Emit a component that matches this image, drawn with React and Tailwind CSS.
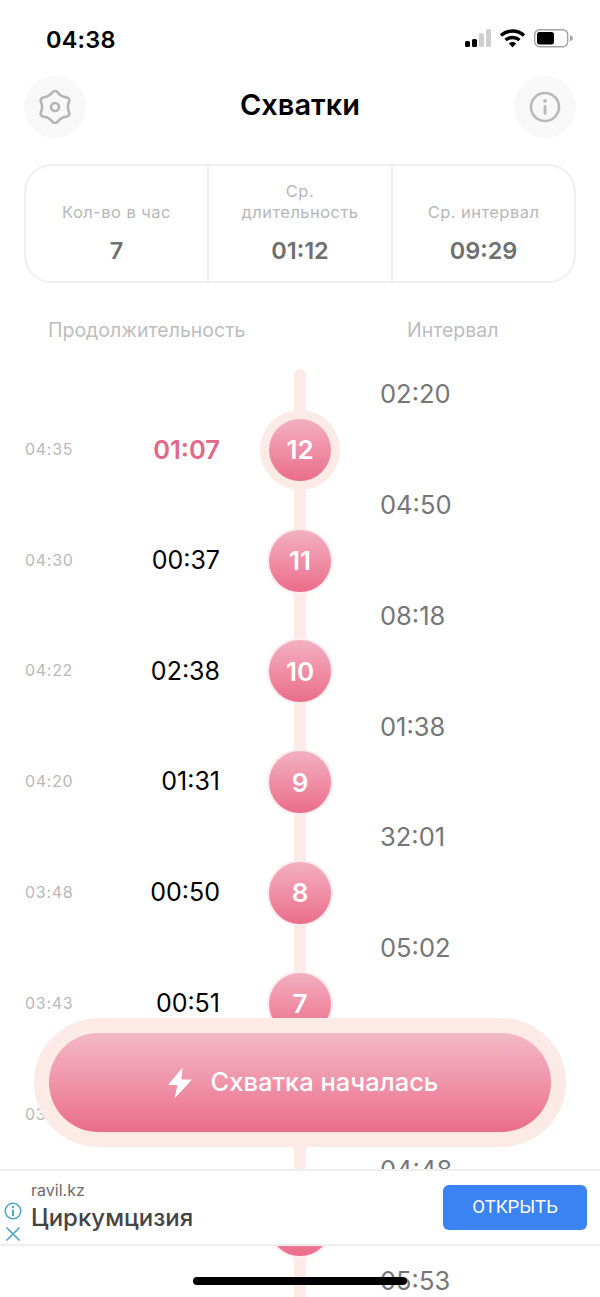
import React from 'react';

// the last rows sit under the button and the ad, only what shows is filled in
const rows = [
  { at: '04:35', len: '01:07', n: 12, active: true },
  { at: '04:30', len: '00:37', n: 11 },
  { at: '04:22', len: '02:38', n: 10 },
  { at: '04:20', len: '01:31', n: 9 },
  { at: '03:48', len: '00:50', n: 8 },
  { at: '03:43', len: '00:51', n: 7 },
  { at: '03:37', len: '', n: '' },
  { at: '', len: '', n: '' },
];

const intervals = ['02:20', '04:50', '08:18', '01:38', '32:01', '05:02', '', '04:48', '05:53'];

const stats = [
  { label: 'Кол-во в час', value: '7' },
  { label: 'Ср. длительность', value: '01:12', narrow: true },
  { label: 'Ср. интервал', value: '09:29' },
];

// six soft lobes, top lobe on the vertical axis
const gearPath = () => {
  const pts = [];
  for (let i = 0; i < 12; i++) {
    const a = (i * Math.PI) / 6 - Math.PI / 2;
    const r = i % 2 === 0 ? 18 : 12;
    pts.push([16 + r * Math.cos(a), 17 + r * Math.sin(a)]);
  }
  const mid = (p, q) => [(p[0] + q[0]) / 2, (p[1] + q[1]) / 2];
  const start = mid(pts[11], pts[0]);
  let d = `M${start[0].toFixed(2)} ${start[1].toFixed(2)}`;
  pts.forEach((p, i) => {
    const m = mid(p, pts[(i + 1) % 12]);
    d += ` Q${p[0].toFixed(2)} ${p[1].toFixed(2)} ${m[0].toFixed(2)} ${m[1].toFixed(2)}`;
  });
  return d + 'Z';
};

const StatusBar = () => (
  <div className="h-[76px] pt-[2px] flex items-center justify-between pl-[46px] pr-[27px]">
    <span className="pt-[1px] text-[23.5px] font-semibold text-black tracking-[0.2px]">04:38</span>
    <svg width="108" height="20" viewBox="0 0 108 20">
      <rect x="0" y="12" width="5" height="6" rx="1.5" fill="#000" />
      <rect x="7" y="10" width="5" height="8" rx="1.5" fill="#000" />
      <rect x="14" y="4" width="5" height="14" rx="1.5" fill="#cfcfcf" />
      <rect x="21" y="0" width="5" height="18" rx="1.5" fill="#cfcfcf" />
      <path d="M36 6.5 A17 17 0 0 1 59 6.5" fill="none" stroke="#000" strokeWidth="3.4" />
      <path d="M40.5 11 A11 11 0 0 1 54.5 11" fill="none" stroke="#000" strokeWidth="3.4" />
      <path d="M47.5 18.5 L43.8 14.5 A5.5 5.5 0 0 1 51.2 14.5 Z" fill="#000" />
      <rect x="69.7" y="0.7" width="33" height="17" rx="5" fill="none" stroke="#a3a3a3" strokeWidth="1.4" />
      <rect x="72" y="3" width="17" height="12.5" rx="2.5" fill="#000" />
      <path d="M105 6.5 a2.5 2.5 0 0 1 0 5.5 Z" fill="#a3a3a3" />
    </svg>
  </div>
);

const Header = () => (
  <div className="h-[61px] px-[24px] flex items-center justify-between">
    <div className="w-[62px] h-[62px] rounded-full bg-[#f8f8f8] flex items-center justify-center">
      <svg width="32" height="34" viewBox="0 0 32 34" fill="none" stroke="#b4b4b4" strokeWidth="2.6">
        <path d={gearPath()} strokeLinejoin="round" />
        <circle cx="16" cy="17" r="4" />
      </svg>
    </div>
    <h1 className="pb-[4px] text-[29px] font-semibold text-black">Схватки</h1>
    <div className="w-[62px] h-[62px] rounded-full bg-[#f8f8f8] flex items-center justify-center">
      <svg width="32" height="32" viewBox="0 0 32 32" fill="none">
        <circle cx="16" cy="16" r="14" stroke="#b9b9b9" strokeWidth="2.6" />
        <circle cx="16" cy="9.8" r="1.9" fill="#b9b9b9" />
        <rect x="14.6" y="14" width="2.8" height="10" rx="1.4" fill="#b9b9b9" />
      </svg>
    </div>
  </div>
);

const StatsCard = () => (
  <div className="mx-[24px] mt-[27px] h-[119px] rounded-[28px] border-2 border-[#efefef] grid grid-cols-[183px_184px_1fr] divide-x-2 divide-[#efefef]">
    {stats.map((s) => (
      <div key={s.value} className="flex flex-col items-center justify-end pb-[15px]">
        <div className={`text-[16.5px] leading-[21px] text-[#b7b7b7] text-center tracking-[0.45px] ${s.narrow ? 'w-[130px]' : ''}`}>
          {s.label}
        </div>
        <div className="mt-[13px] text-[23.5px] leading-[30px] font-semibold text-[#6f6f6f]">{s.value}</div>
      </div>
    ))}
  </div>
);

const Node = ({ n, active }) => (
  <div className={`rounded-full flex items-center justify-center shrink-0 ${active ? 'w-[80px] h-[80px] bg-[#fbeae6]' : 'w-[66px] h-[66px] bg-[#fdeaea]'}`}>
    <div className="w-[62px] h-[62px] rounded-full bg-gradient-to-b from-[#f2b0c2] to-[#ea6c8b] flex items-center justify-center text-white text-[26px] font-semibold">
      {n}
    </div>
  </div>
);

const Timeline = () => (
  <div className="relative -mt-[6px] h-[1000px] flex">
    <div className="absolute left-[294px] top-[30px] bottom-0 w-[12px] rounded-t-full bg-[#fbeae6]" />
    <div className="relative w-[380px] pt-[55.4px]">
      {rows.map((r, i) => (
        <div key={i} className="h-[110.8px] flex items-center">
          <span className="pl-[25px] w-[100px] text-[16px] tracking-[0.7px] text-[#b9b9b9] -translate-y-px">{r.at}</span>
          <span className={`w-[120px] text-right ${r.active ? 'text-[25.5px] font-semibold text-[#e2688a]' : 'text-[25px] text-black'}`}>{r.len}</span>
          <div className="w-[160px] flex justify-center">
            <Node n={r.n} active={r.active} />
          </div>
        </div>
      ))}
    </div>
    <div className="relative">
      {intervals.map((t, i) => (
        <div key={i} className="h-[110.8px] flex items-center text-[25.5px] text-[#767676]">{t}</div>
      ))}
    </div>
  </div>
);

const StartButton = () => (
  <div className="absolute left-[34px] top-[1018px] w-[532px] h-[129px] rounded-full bg-[#fbeae6] flex items-center justify-center">
    <button className="w-[502px] h-[99px] pl-[5px] rounded-full bg-gradient-to-b from-[#f2b8c7] to-[#e96c8b] flex items-center justify-center gap-[18px] text-white text-[25.5px] font-medium">
      <svg width="26" height="32" viewBox="0 0 26 32" fill="#fff">
        <path d="M15.5 0.5 L1 18 H10.5 L7.5 31.5 L25 12.5 H14.5 Z" strokeLinejoin="round" />
      </svg>
      Схватка началась
    </button>
  </div>
);

const AdBanner = () => (
  <div className="absolute left-0 right-0 top-[1169px] h-[77px] bg-white border-y-2 border-[#eeeeee] flex items-center">
    <div className="w-[31px] h-full flex flex-col items-center justify-end pb-[2px] gap-[6px] pr-[5px]">
      <svg width="18" height="18" viewBox="0 0 18 18" fill="none">
        <circle cx="9" cy="9" r="7.8" stroke="#4fa9c6" strokeWidth="1.6" />
        <circle cx="9" cy="5" r="1.2" fill="#4fa9c6" />
        <rect x="8" y="7.5" width="2" height="6.5" fill="#4fa9c6" />
      </svg>
      <svg width="16" height="16" viewBox="0 0 16 16" fill="none" stroke="#4fa9c6" strokeWidth="1.7">
        <path d="M1.5 1.5 L14.5 14.5 M14.5 1.5 L1.5 14.5" />
      </svg>
    </div>
    <div className="flex-1 pb-[3px]">
      <div className="text-[16px] leading-[20px] text-[#6b6b6b]">ravil.kz</div>
      <div className="mt-[3px] text-[24px] leading-[30px] font-medium text-[#444444]">Циркумцизия</div>
    </div>
    <button className="mr-[13px] w-[144px] h-[45px] rounded-[6px] bg-[#3b82f2] text-white text-[18.5px] font-[Roboto,sans-serif]">
      ОТКРЫТЬ
    </button>
  </div>
);

export default function App() {
  return (
    <div className="relative w-[600px] h-[1297px] overflow-hidden bg-white font-[Inter,sans-serif]">
      <StatusBar />
      <Header />
      <StatsCard />
      <div className="mt-[34px] h-[28px] flex items-center text-[19.5px] text-[#bdbdbd]">
        <span className="ml-[48px] w-[359px]">Продолжительность</span>
        <span>Интервал</span>
      </div>
      <Timeline />
      <StartButton />
      <AdBanner />
      <div className="absolute left-[193px] top-[1277px] w-[214px] h-[8px] rounded-full bg-black" />
    </div>
  );
}
